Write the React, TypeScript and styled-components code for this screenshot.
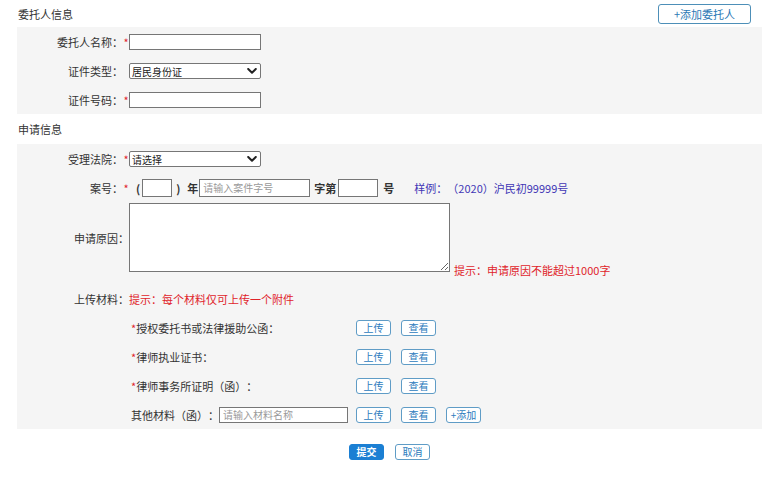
import React from 'react';
import styled, { createGlobalStyle } from 'styled-components';

const GlobalStyle = createGlobalStyle`
  body {
    margin: 0;
    background: #fff;
    font-family: "Noto Sans CJK SC", "Noto Sans", sans-serif;
    font-size: 11px;
    color: #333;
    text-spacing-trim: space-all;
  }

  * {
    box-sizing: border-box;
  }
`;

const Page = styled.div`
  width: 745px;
  margin-left: 17px;
`;

const SectionHeader = styled.div<{ $height: number }>`
  display: flex;
  align-items: center;
  justify-content: space-between;
  height: ${({ $height }) => $height}px;
  padding-left: 1px;
`;

const SectionTitle = styled.span`
  line-height: 14px;
  color: #333;
`;

const AddButton = styled.button`
  width: 93px;
  height: 20px;
  margin-right: 11px;
  padding: 0;
  border: 1px solid #4d8fb8;
  border-radius: 3px;
  background: #fff;
  color: #2b78b5;
  font-family: inherit;
  font-size: 11px;
  line-height: 16px;
  cursor: pointer;
`;

const Panel = styled.div`
  background: #f5f5f5;
`;

const Row = styled.div`
  display: flex;
  align-items: center;
  min-height: 29px;
`;

const ReasonRow = styled(Row)`
  padding: 1px 0 12px;
`;

const Label = styled.div`
  flex: none;
  width: 112px;
  text-align: right;
  line-height: 14px;
  white-space: nowrap;
`;

const Star = styled.span<{ $hidden?: boolean }>`
  display: inline-block;
  width: 6px;
  color: #e0242b;
  text-align: center;
  visibility: ${({ $hidden }) => ($hidden ? 'hidden' : 'visible')};
`;

const TextInput = styled.input<{ $width: number; $height?: number }>`
  width: ${({ $width }) => $width}px;
  height: ${({ $height }) => $height ?? 16}px;
  margin: 0;
  padding: 0 3px;
  border: 1px solid #767676;
  background: #fff;
  font-family: inherit;
  font-size: 10px;
  outline: none;

  &::placeholder {
    color: #9a9a9a;
  }
`;

const SelectBox = styled.div`
  position: relative;
  width: 132px;
  height: 16px;
`;

const Select = styled.select`
  appearance: none;
  width: 100%;
  height: 100%;
  margin: 0;
  padding: 0 18px 0 2px;
  border: 1px solid #767676;
  border-radius: 2px;
  background: #fff;
  color: #222;
  font-family: inherit;
  font-size: 10px;
  outline: none;
`;

const Chevron = styled.svg`
  position: absolute;
  right: 4px;
  top: 5px;
  pointer-events: none;
`;

const CaseLine = styled.div`
  display: flex;
  align-items: center;
`;

const Word = styled.span<{ $gap: number; $bold?: boolean }>`
  margin-left: ${({ $gap }) => $gap}px;
  font-weight: ${({ $bold }) => ($bold ? 700 : 400)};
  line-height: 14px;
  color: #333;
`;

const CaseInput = styled(TextInput)<{ $gap: number }>`
  margin-left: ${({ $gap }) => $gap}px;
`;

const Example = styled.span`
  margin-left: 20px;
  color: #4237b6;
  line-height: 14px;
`;

const ReasonField = styled.div`
  display: flex;
  align-items: flex-end;
`;

const TextArea = styled.textarea`
  width: 321px;
  height: 69px;
  margin: 0;
  padding: 2px 3px;
  border: 1px solid #767676;
  background: #fff;
  font-family: inherit;
  font-size: 10px;
  outline: none;
  resize: both;
`;

const Hint = styled.span<{ $offset?: number }>`
  margin-left: ${({ $offset }) => $offset ?? 0}px;
  margin-bottom: ${({ $offset }) => ($offset ? -5 : 0)}px;
  color: #e0242b;
  line-height: 14px;
`;

const UploadRow = styled.div`
  display: flex;
  align-items: center;
  height: 29px;
  padding-left: 114px;
`;

const MaterialName = styled.div`
  flex: none;
  display: flex;
  align-items: center;
  width: 225px;
  line-height: 14px;
  white-space: nowrap;
`;

const MaterialStar = styled.span`
  color: #e0242b;
`;

const ButtonGroup = styled.div`
  display: flex;
  gap: 10px;
`;

const SmallButton = styled.button<{ $primary?: boolean }>`
  width: 35px;
  height: 16px;
  padding: 0;
  border: 1px solid ${({ $primary }) => ($primary ? '#1b7fd3' : '#5f9cc6')};
  border-radius: 3px;
  background: ${({ $primary }) => ($primary ? '#1b7fd3' : '#fff')};
  color: ${({ $primary }) => ($primary ? '#fff' : '#2c7bbd')};
  font-family: inherit;
  font-size: 10px;
  font-weight: ${({ $primary }) => ($primary ? 700 : 400)};
  line-height: 14px;
  cursor: pointer;
`;

const Actions = styled.div`
  display: flex;
  justify-content: center;
  gap: 11px;
  margin-top: 15px;
`;

const materials = ['授权委托书或法律援助公函：', '律师执业证书：', '律师事务所证明（函）：'];

function ChevronIcon() {
  return (
    <Chevron width="10" height="6" viewBox="0 0 10 6">
      <path d="M1.2 1 L5 4.8 L8.8 1" fill="none" stroke="#222" strokeWidth="2" strokeLinecap="round" strokeLinejoin="round" />
    </Chevron>
  );
}

function Dropdown({ value }: { value: string }) {
  return (
    <SelectBox>
      <Select defaultValue={value}>
        <option value={value}>{value}</option>
      </Select>
      <ChevronIcon />
    </SelectBox>
  );
}

export default function App() {
  return (
    <Page>
      <GlobalStyle />

      <SectionHeader $height={27}>
        <SectionTitle>委托人信息</SectionTitle>
        <AddButton>+添加委托人</AddButton>
      </SectionHeader>

      <Panel>
        <Row>
          <Label>
            委托人名称：<Star>*</Star>
          </Label>
          <TextInput $width={132} />
        </Row>
        <Row>
          <Label>
            证件类型：<Star $hidden>*</Star>
          </Label>
          <Dropdown value="居民身份证" />
        </Row>
        <Row>
          <Label>
            证件号码：<Star>*</Star>
          </Label>
          <TextInput $width={132} />
        </Row>
      </Panel>

      <SectionHeader $height={30}>
        <SectionTitle>申请信息</SectionTitle>
      </SectionHeader>

      <Panel>
        <Row>
          <Label>
            受理法院：<Star>*</Star>
          </Label>
          <Dropdown value="请选择" />
        </Row>
        <Row>
          <Label>
            案号：<Star>*</Star>
          </Label>
          <CaseLine>
            <Word $gap={7} $bold>(</Word>
            <CaseInput $gap={2} $width={30} $height={18} />
            <Word $gap={4} $bold>)</Word>
            <Word $gap={7} $bold>年</Word>
            <CaseInput $gap={1} $width={111} $height={18} placeholder="请输入案件字号" />
            <Word $gap={4} $bold>字第</Word>
            <CaseInput $gap={2} $width={40} $height={18} />
            <Word $gap={5} $bold>号</Word>
            <Example>样例：（2020）沪民初99999号</Example>
          </CaseLine>
        </Row>
        <ReasonRow>
          <Label>申请原因：</Label>
          <ReasonField>
            <TextArea />
            <Hint $offset={4}>提示：申请原因不能超过1000字</Hint>
          </ReasonField>
        </ReasonRow>
        <Row>
          <Label>上传材料：</Label>
          <Hint>提示：每个材料仅可上传一个附件</Hint>
        </Row>
        {materials.map((name) => (
          <UploadRow key={name}>
            <MaterialName>
              <MaterialStar>*</MaterialStar>
              {name}
            </MaterialName>
            <ButtonGroup>
              <SmallButton>上传</SmallButton>
              <SmallButton>查看</SmallButton>
            </ButtonGroup>
          </UploadRow>
        ))}
        <UploadRow>
          <MaterialName>
            其他材料（函）：
            <TextInput $width={129} placeholder="请输入材料名称" />
          </MaterialName>
          <ButtonGroup>
            <SmallButton>上传</SmallButton>
            <SmallButton>查看</SmallButton>
            <SmallButton>+添加</SmallButton>
          </ButtonGroup>
        </UploadRow>
      </Panel>

      <Actions>
        <SmallButton $primary>提交</SmallButton>
        <SmallButton>取消</SmallButton>
      </Actions>
    </Page>
  );
}
